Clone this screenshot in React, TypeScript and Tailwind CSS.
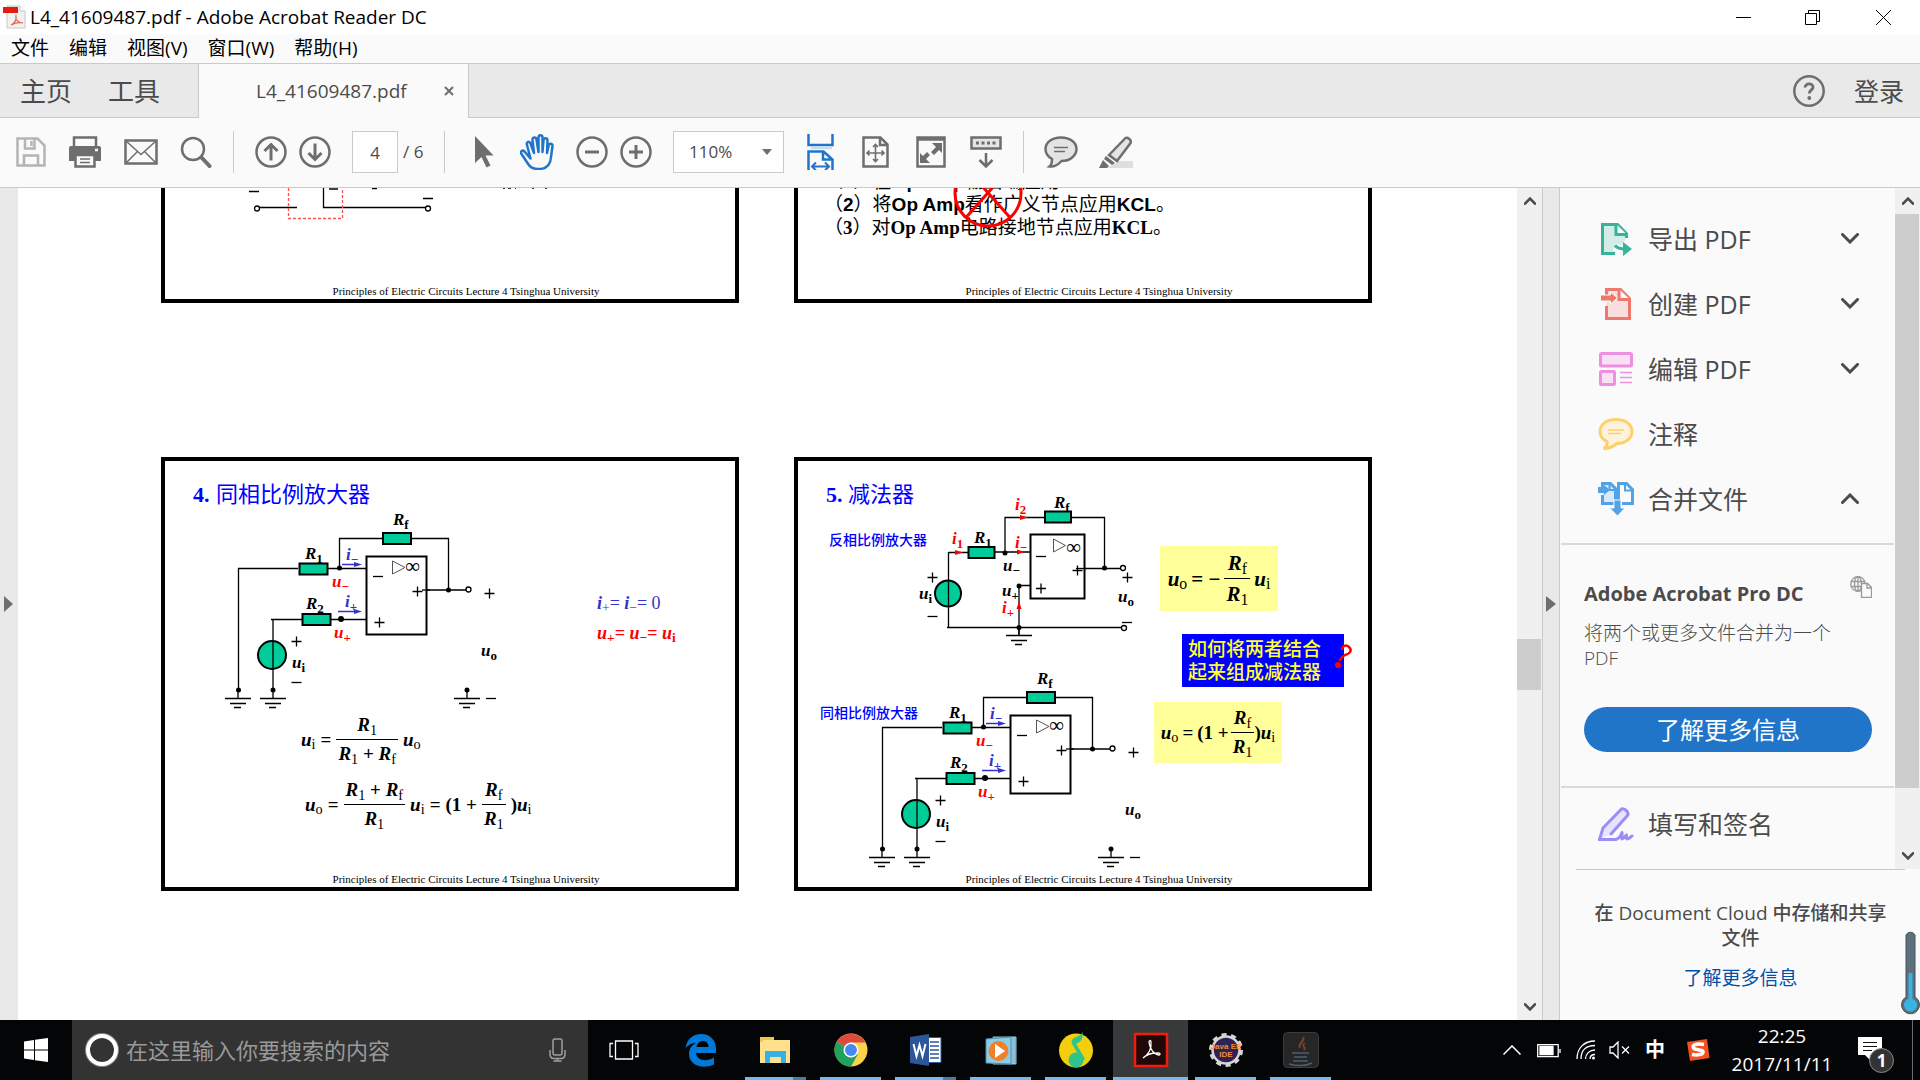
import React from "react";

const UI = "font-['Open_Sans','Noto_Sans_CJK_SC',sans-serif]";
const GREY = "#6e6e6e";
const BLUE = "#2175c9";

/* ---------- circuit drawing helpers ---------- */

type SymProps = {
  x: number;
  y: number;
  m: string;
  s: string;
  color?: string;
  size?: number;
};

function Sym({ x, y, m, s, color = "#000", size = 17 }: SymProps) {
  return (
    <text x={x} y={y} fill={color} fontSize={size} fontWeight={700}>
      <tspan fontStyle="italic">{m}</tspan>
      <tspan dy={4} fontSize={13}>
        {s}
      </tspan>
    </text>
  );
}

function Plus({ x, y }: { x: number; y: number }) {
  return <path d={`M${x - 5} ${y}h10M${x} ${y - 5}v10`} stroke="#000" strokeWidth="1.3" fill="none" />;
}

function Minus({ x, y }: { x: number; y: number }) {
  return <path d={`M${x - 5} ${y}h10`} stroke="#000" strokeWidth="1.3" fill="none" />;
}

function Resistor({ x, y, w = 28 }: { x: number; y: number; w?: number }) {
  return <rect x={x} y={y} width={w} height={11} fill="#00cc99" stroke="#000" strokeWidth="2" />;
}

function Ground({ x, y }: { x: number; y: number }) {
  return (
    <path
      d={`M${x} ${y - 8}v8M${x - 13} ${y}h26M${x - 8} ${y + 5}h16M${x - 4} ${y + 9}h7`}
      stroke="#000"
      strokeWidth="1.3"
      fill="none"
    />
  );
}

function NonInvertingAmp() {
  return (
    <g>
      <Sym x={393} y={525} m="R" s="f" />
      <Sym x={305} y={559} m="R" s="1" />
      <Sym x={306} y={609} m="R" s="2" />
      <g stroke="#000" strokeWidth="1.3" fill="none">
        <path d="M382 538.5H339.5V568M412 538.5h36.500V590M238.500 690V568.500H298M328 568.500h38M302 619.500h-31M330 619.500h36M425 590h41" />
      </g>
      <Resistor x={383} y={533} />
      <Resistor x={299.500} y={563.500} />
      <Resistor x={302.500} y={614} />
      <rect x={366.500} y={556.500} width={60} height={78} fill="#fff" stroke="#000" strokeWidth="2" />
      <path d="M392.500 561v13l12.500-6.500z" fill="none" stroke="#555" strokeWidth="1" />
      <text x={405} y={573} fontSize={21}>
        ∞
      </text>
      <Minus x={378} y={576.500} />
      <Plus x={417.500} y={591.500} />
      <path d="M422 590h8" stroke="#000" strokeWidth="1.3" />
      <Plus x={379.500} y={622.500} />
      <Plus x={489.500} y={593.500} />
      <circle cx={272} cy={655} r={14} fill="#00cc99" stroke="#000" strokeWidth="2" />
      <path d="M273 619V690" stroke="#000" strokeWidth="1.3" />
      <circle cx={468.500} cy={589.500} r={2.500} fill="#fff" stroke="#000" strokeWidth="1.3" />
      <circle cx={448.500} cy={590} r={2.500} />
      <circle cx={339.500} cy={568} r={2.500} />
      <circle cx={341} cy={619} r={3} />
      <circle cx={238.500} cy={690} r={2.500} />
      <circle cx={273} cy={690} r={2.500} />
      <circle cx={467} cy={690} r={2.500} />
      <Ground x={238} y={698.500} />
      <Ground x={273} y={698.500} />
      <Ground x={467} y={698.500} />
      <Minus x={491} y={698.500} />
      <Plus x={296.500} y={641.500} />
      <Minus x={296.500} y={682.500} />
      <Sym x={292} y={668} m="u" s="i" />
      <Sym x={481} y={656} m="u" s="o" />
      <Sym x={332} y={587} m="u" s="−" color="#ff0000" />
      <Sym x={334} y={638} m="u" s="+" color="#ff0000" />
      <Sym x={346} y={560} m="i" s="−" color="#3333cc" />
      <Sym x={345} y={607} m="i" s="+" color="#3333cc" />
      <path d="M342 564.500h14M338 611.500h18" stroke="#3333cc" strokeWidth="1.300" />
      <path d="M354 562l8 2.500-8 2.500zM354 609l8 2.500-8 2.500z" fill="#3333cc" />
    </g>
  );
}

function InvertingAmp() {
  return (
    <g>
      <Sym x={1054} y={508} m="R" s="f" />
      <Sym x={974} y={543} m="R" s="1" />
      <g stroke="#000" strokeWidth="1.3" fill="none">
        <path d="M1044 517.500h-39V552M1071 517.500h33.500V568M948.500 552.500H968M995 552h35M1076 568.500h44M947 627.500h174M1019 636v-50.500h11" />
      </g>
      <Resistor x={1045} y={511.500} w={26} />
      <Resistor x={968.500} y={547} w={26} />
      <rect x={1030.500} y={534.500} width={54} height={64} fill="#fff" stroke="#000" strokeWidth="2" />
      <path d="M1053.500 539v13l12-6.500z" fill="none" stroke="#555" strokeWidth="1" />
      <text x={1066} y={554} fontSize={21}>
        ∞
      </text>
      <Minus x={1041} y={556.500} />
      <Plus x={1077.500} y={570.500} />
      <path d="M1076 568.500h10" stroke="#000" strokeWidth="1.3" />
      <Plus x={1041} y={588.500} />
      <Plus x={1127.500} y={577.500} />
      <Plus x={932.500} y={577.500} />
      <Minus x={932.500} y={616.500} />
      <Minus x={1127} y={622.500} />
      <circle cx={948} cy={593.500} r={13} fill="#00cc99" stroke="#000" strokeWidth="2" />
      <path d="M948.500 552v76" stroke="#000" strokeWidth="1.3" />
      <circle cx={1123} cy={568} r={2.500} fill="#fff" stroke="#000" strokeWidth="1.3" />
      <circle cx={1124} cy={628} r={2.500} fill="#fff" stroke="#000" strokeWidth="1.3" />
      <circle cx={1104.500} cy={568} r={2.500} />
      <circle cx={1005} cy={553} r={2.500} />
      <circle cx={1019} cy={586} r={2.500} />
      <circle cx={1019} cy={627.500} r={2.500} />
      <Ground x={1019} y={635.500} />
      <path d="M955 550l8 2.500-8 2.500zM1020 515l8 2.500-8 2.500zM1017 549.500l8 2.500-8 2.500zM1016.500 609l2.500-8 2.500 8z" fill="#ff0000" />
      <Sym x={919} y={599} m="u" s="i" />
      <Sym x={1118} y={602} m="u" s="o" />
      <Sym x={1003} y={571} m="u" s="−" />
      <Sym x={1002} y={596} m="u" s="+" />
      <Sym x={952} y={544} m="i" s="1" color="#ff0000" />
      <Sym x={1015} y={510} m="i" s="2" color="#ff0000" />
      <Sym x={1015} y={548} m="i" s="−" color="#ff0000" />
      <Sym x={1002} y={613} m="i" s="+" color="#ff0000" />
    </g>
  );
}

/* ---------- formulas ---------- */

function V({ m, s }: { m: string; s: string }) {
  return (
    <span className="whitespace-nowrap">
      <i>{m}</i>
      <sub className="font-normal">{s}</sub>
    </span>
  );
}

function Frac({ top, bottom }: { top: React.ReactNode; bottom: React.ReactNode }) {
  return (
    <span className="inline-flex flex-col text-center">
      <span className="border-b border-black px-0.5 pb-0.5">{top}</span>
      <span className="px-0.5 pt-0.5">{bottom}</span>
    </span>
  );
}

function Footer() {
  return (
    <p className="absolute inset-x-0 bottom-0 pl-8 text-center text-[11px] leading-4 whitespace-nowrap">
      Principles of Electric Circuits Lecture 4 Tsinghua University
    </p>
  );
}

const SERIF = "font-['Liberation_Serif','Noto_Sans_CJK_SC',serif]";

function Slide({ cropped, children }: { cropped?: boolean; children: React.ReactNode }) {
  return (
    <section
      className={`relative w-[578px] shrink-0 border-4 border-black bg-white text-black ${SERIF} ${
        cropped ? "h-[115px] border-t-0" : "h-[434px]"
      }`}
    >
      {children}
      <Footer />
    </section>
  );
}

function Pages() {
  return (
    <div className="flex flex-col items-center gap-[154px] pr-0.5">
      <div className="flex gap-[55px]">
        <Slide cropped>
          <svg className="absolute inset-0 h-full w-full" viewBox="165 188 570 111">
            <path d="M249 191.500h10M423 198.500h10M259 207.500h38M323.500 188v19.500H426M329 189h9M372 188.500h5" stroke="#000" strokeWidth="1.3" fill="none" />
            <path d="M503 188.500h2M508 188.500h3M515 188.500h1M532 188.500h2M545 188.500h2" stroke="#333" strokeWidth="1" />
            <path d="M288.500 188v30.500h54V188" stroke="#ff5050" strokeWidth="1.3" strokeDasharray="3 2" fill="none" />
            <circle cx="257" cy="208.500" r="2.500" fill="#fff" stroke="#000" strokeWidth="1.3" />
            <circle cx="428" cy="208.500" r="2.500" fill="#fff" stroke="#000" strokeWidth="1.3" />
          </svg>
        </Slide>
        <Slide cropped>
          <svg className="absolute inset-0 h-full w-full" viewBox="798 188 570 111">
            <g fontSize="19" fontWeight="700">
              <text x="824" y="188" className="font-['Liberation_Sans','Noto_Sans_CJK_SC',sans-serif]">
                <tspan fontWeight="400">（</tspan>1<tspan fontWeight="400">）在</tspan>Op Amp
                <tspan fontWeight="400">输出端应用</tspan>
              </text>
              <text x="824" y="211" className="font-['Liberation_Sans','Noto_Sans_CJK_SC',sans-serif]">
                <tspan fontWeight="400">（</tspan>2<tspan fontWeight="400">）将</tspan>Op Amp
                <tspan fontWeight="400">看作广义节点应用</tspan>KCL<tspan fontWeight="400">。</tspan>
              </text>
              <text x="824" y="234">
                <tspan fontWeight="400">（</tspan>3<tspan fontWeight="400">）对</tspan>Op Amp
                <tspan fontWeight="400">电路接地节点应用</tspan>KCL<tspan fontWeight="400">。</tspan>
              </text>
            </g>
            <g stroke="#ff0000" strokeWidth="3" fill="none">
              <circle cx="988" cy="193" r="33" />
              <path d="M966 217.500L1010 168M1010 217.500L966 168" />
            </g>
          </svg>
        </Slide>
      </div>
      <div className="flex gap-[55px]">
        <Slide>
          <svg className="absolute inset-0 h-full w-full" viewBox="165 461 570 426">
            <text x="193" y="502" fontSize="22" fill="#0000ff">
              <tspan fontWeight="700">4.</tspan>
              <tspan x="216">同相比例放大器</tspan>
            </text>
            <NonInvertingAmp />
          </svg>
          <p className="absolute top-[130px] left-[432px] text-[18px] leading-6 text-[#3333cc]">
            <i className="font-bold">i</i>
            <sub>+</sub>= <i className="font-bold">i</i>
            <sub>−</sub>= 0
          </p>
          <p className="absolute top-[160px] left-[432px] text-[18px] leading-6 font-bold text-[#ff0000]">
            <i>u</i>
            <sub>+</sub>= <i>u</i>
            <sub>−</sub>= <i>u</i>
            <sub>i</sub>
          </p>
          <div className="absolute top-[252px] left-[136px] flex h-[53px] items-center gap-[5px] text-[19px] leading-6 font-bold">
            <V m="u" s="i" />=
            <Frac top={<V m="R" s="1" />} bottom={<><V m="R" s="1" /> + <V m="R" s="f" /></>} />
            <V m="u" s="o" />
          </div>
          <div className="absolute top-[317px] left-[140px] flex h-[53px] items-center gap-[5px] text-[19px] leading-6 font-bold">
            <V m="u" s="o" />=
            <Frac top={<><V m="R" s="1" /> + <V m="R" s="f" /></>} bottom={<V m="R" s="1" />} />
            <V m="u" s="i" />=<span>(1 +</span>
            <Frac top={<V m="R" s="f" />} bottom={<V m="R" s="1" />} />
            <span>
              )<V m="u" s="i" />
            </span>
          </div>
        </Slide>
        <Slide>
          <svg className="absolute inset-0 h-full w-full" viewBox="798 461 570 426">
            <text x="826" y="502" fontSize="22" fill="#0000ff">
              <tspan fontWeight="700">5.</tspan>
              <tspan x="848">减法器</tspan>
            </text>
            <g fontSize="14" fill="#0000ff" fontWeight="500">
              <text x="829" y="545">反相比例放大器</text>
              <text x="820" y="718">同相比例放大器</text>
            </g>
            <InvertingAmp />
            <g transform="translate(644 159)">
              <NonInvertingAmp />
            </g>
          </svg>
          <div className="absolute top-[85px] left-[362px] flex h-[65px] w-[118px] items-center justify-center gap-1 bg-[#ffff99] text-[21px] leading-[26px] font-bold">
            <V m="u" s="o" />
            <span>= −</span>
            <Frac top={<V m="R" s="f" />} bottom={<V m="R" s="1" />} />
            <V m="u" s="i" />
          </div>
          <p className="absolute top-[173px] left-[384px] h-[53px] w-[162px] bg-[#0000ff] px-1.5 pt-1 text-[19px] leading-[23px] font-medium text-[#ffff33]">
            如何将两者结合
            <br />
            起来组成减法器
          </p>
          <svg className="absolute top-[182px] left-[536px] h-7 w-6" viewBox="0 0 24 28">
            <path d="M8 7C8 3 12 1 15 4C19 8 15 11 11 12C9 13 7 15 5.500 18" fill="none" stroke="#ff0000" strokeWidth="2.500" />
            <circle cx="4" cy="22" r="3" fill="#ff0000" />
          </svg>
          <div className="absolute top-[241px] left-[356px] flex h-[61px] w-[128px] items-center justify-center bg-[#ffff99] text-[19px] leading-6 font-bold">
            <V m="u" s="o" />
            <span className="px-1">=</span>
            <span className="pr-0.5">(1 +</span>
            <Frac top={<V m="R" s="f" />} bottom={<V m="R" s="1" />} />
            <span>
              )<V m="u" s="i" />
            </span>
          </div>
        </Slide>
      </div>
    </div>
  );
}

/* ---------- generic pieces ---------- */

function Chevron({ up, className, w = 2 }: { up?: boolean; className: string; w?: number }) {
  return (
    <svg viewBox="0 0 18 11" className={className} fill="none" stroke="#4b4b4b" strokeWidth={w} strokeLinecap="round">
      <path d={up ? "M1.500 9.500L9 2l7.500 7.500" : "M1.500 1.500L9 9l7.500-7.500"} />
    </svg>
  );
}

function Tool({ label, className, box, children }: { label: string; className: string; box: string; children: React.ReactNode }) {
  return (
    <button aria-label={label} className={`shrink-0 ${className}`}>
      <svg viewBox={box} className="block h-full w-full" fill="none" stroke={GREY} strokeWidth="2.500">
        {children}
      </svg>
    </button>
  );
}

function Sep({ className }: { className: string }) {
  return <div className={`h-[42px] w-px shrink-0 bg-[#cacaca] ${className}`} />;
}

function TitleBar() {
  return (
    <header className="flex h-[34px] shrink-0 items-center bg-white pl-[3px] text-[19px] text-black">
      <svg viewBox="0 0 23 24" className="h-6 w-[23px]">
        <path d="M4 1h13l5 5v17H4z" fill="#f1f1f1" stroke="#c8c8c8" />
        <path d="M17 1v5h5" fill="#fff" stroke="#c8c8c8" />
        <path d="M0 2h15v6H0z" fill="#e11d0b" />
        <path d="M8 20c4-2 6-6 5-9c-1 4 3 7 7 7c-4-1-8 0-12 2z" fill="none" stroke="#f0605a" strokeWidth="1.200" />
      </svg>
      <h1 className="ml-1 grow leading-6">L4_41609487.pdf - Adobe Acrobat Reader DC</h1>
      <button aria-label="最小化" className="flex h-full w-[69px] items-center justify-center">
        <svg viewBox="0 0 15 15" className="h-[15px] w-[15px]" stroke="#000">
          <path d="M0 7.500h15" />
        </svg>
      </button>
      <button aria-label="还原" className="flex h-full w-[69px] items-center justify-center">
        <svg viewBox="0 0 15 15" className="h-[15px] w-[15px]" stroke="#000" fill="none">
          <path d="M.5 3.500h11v11H.5zM3.500 3.500v-3h11v11h-3" />
        </svg>
      </button>
      <button aria-label="关闭" className="flex h-full w-[73px] items-center justify-center">
        <svg viewBox="0 0 15 15" className="h-[15px] w-[15px]" stroke="#000">
          <path d="M0 0l15 15M15 0L0 15" />
        </svg>
      </button>
    </header>
  );
}

function MenuBar() {
  return (
    <nav className="flex h-[30px] shrink-0 items-center gap-5 border-b border-[#cacaca] bg-[#fafafa] pb-0.5 pl-[11px] text-[19px] leading-6 text-black">
      {["文件", "编辑", "视图(V)", "窗口(W)", "帮助(H)"].map((m) => (
        <button key={m}>{m}</button>
      ))}
    </nav>
  );
}

function TabBar() {
  return (
    <div className="flex h-[54px] shrink-0 bg-[#e9e9e9] text-[#4b4b4b]">
      <div className="flex w-[199px] items-center gap-9 border-r border-b border-[#cacaca] pl-5 text-[26px] leading-8">
        <button>主页</button>
        <button>工具</button>
      </div>
      <div className="flex w-[270px] items-center border-r border-[#cacaca] bg-[#fafafa] pl-[57px]">
        <button className="w-[154px] text-left text-[19px] leading-7 whitespace-nowrap">L4_41609487.pdf</button>
        <button aria-label="关闭标签" className="ml-[34px]">
          <svg viewBox="0 0 10 10" className="h-[10px] w-[10px]" stroke="#6e6e6e" strokeWidth="2">
            <path d="M1 1l8 8M9 1L1 9" />
          </svg>
        </button>
      </div>
      <div className="flex grow items-center justify-end gap-[29px] border-b border-[#cacaca] pr-4">
        <button aria-label="帮助">
          <svg viewBox="0 0 32 32" className="h-8 w-8">
            <circle cx="16" cy="16" r="14.700" fill="none" stroke="#6e6e6e" strokeWidth="2.500" />
            <path d="M12 12.500C12 7.500 20.500 8 20 12.500C19.700 15 16.300 15 16.300 18.500" fill="none" stroke="#6e6e6e" strokeWidth="2.800" />
            <circle cx="16.300" cy="23" r="1.900" fill="#6e6e6e" />
          </svg>
        </button>
        <button className="text-[25px] leading-8">登录</button>
      </div>
    </div>
  );
}

function Toolbar() {
  return (
    <div className="flex h-[70px] shrink-0 items-center border-b border-[#cacaca] bg-[#fafafa] pb-px pl-4 text-[17px] text-[#4b4b4b]">
      <Tool label="保存" className="h-[30px] w-[30px]" box="0 0 30 30">
        <g stroke="#b4b4b4">
          <path d="M1.500 1.500h20l7 7v20h-27zM8 28V18.500h14V28" />
          <path d="M9 2v9.500h9.500V2M15.500 4v5" />
        </g>
      </Tool>
      <Tool label="打印" className="ml-[22px] h-8 w-[34px]" box="0 0 34 32">
        <path d="M6 11V1.500h22V11" fill="#fafafa" />
        <path d="M3 10h28a2 2 0 0 1 2 2v13H1V12a2 2 0 0 1 2-2z" fill={GREY} stroke="none" />
        <path d="M7.500 19h19v11.500h-19z" fill="#fafafa" />
        <path d="M12 23h10M12 26.500h10" strokeWidth="1.500" />
        <path d="M27 14h3" stroke="#fafafa" />
      </Tool>
      <Tool label="邮件" className="ml-[22px] h-[26px] w-[34px]" box="0 0 34 26">
        <path d="M1.500 1.500h31v23h-31z" />
        <path d="M2 2l15 13.500L32 2M2 24l11.500-11.500M32 24L20.500 12.500" strokeWidth="1.500" />
      </Tool>
      <Tool label="搜索" className="ml-[22px] h-[32px] w-[32px]" box="0 0 32 32">
        <circle cx="13" cy="13" r="11" />
        <path d="M21.500 21.500l8 8.500" strokeWidth="4" strokeLinecap="round" />
      </Tool>
      <Sep className="ml-[21px]" />
      <Tool label="上一页" className="ml-[21px] h-8 w-8" box="0 0 32 32">
        <circle cx="16" cy="16" r="14.500" />
        <path d="M16 24.500V9M9.500 15L16 8.500l6.500 6.500" strokeWidth="3" />
      </Tool>
      <Tool label="下一页" className="ml-3 h-8 w-8" box="0 0 32 32">
        <circle cx="16" cy="16" r="14.500" />
        <path d="M16 7.500V23M9.500 17l6.500 6.500 6.500-6.500" strokeWidth="3" />
      </Tool>
      <input
        aria-label="页码"
        defaultValue="4"
        className="ml-[21px] h-[42px] w-[46px] shrink-0 border border-[#cacaca] bg-white text-center"
      />
      <span className="ml-[5px] w-[41px] shrink-0">/ 6</span>
      <Sep className="" />
      <Tool label="选择" className="ml-[29px] h-8 w-5" box="0 0 20 32">
        <path d="M1 0l18.500 19.500h-8l5 10-4 2-5-10.500-6.500 6z" fill={GREY} stroke="none" />
      </Tool>
      <Tool label="手形工具" className="ml-[26px] h-[36px] w-[34px]" box="0 0 34 36">
        <path
          d="M10.500 24.500L4.500 17.500c-2-2-4.500 0-3 2.500l7 10.500c2 3 5 4.500 10 4.500c8 0 12-4 12.500-12l1.500-11c0-3-3.500-3-4 0l-1.500 7l.5-12.500c0-3-4-3-4 0l-1 11.500V3.500c0-3-4-3-4 0V18L16.500 5.500c-.5-3-4.500-2.500-4 .5L14 19l-3.500-9.500c-1-3-4.500-1.500-3.500 1.500z"
          stroke={BLUE}
          strokeLinejoin="round"
        />
      </Tool>
      <Tool label="缩小" className="ml-[22px] h-8 w-8" box="0 0 32 32">
        <circle cx="16" cy="16" r="14.500" />
        <path d="M9 16h14" strokeWidth="3" />
      </Tool>
      <Tool label="放大" className="ml-3 h-8 w-8" box="0 0 32 32">
        <circle cx="16" cy="16" r="14.500" />
        <path d="M9 16h14M16 9v14" strokeWidth="3" />
      </Tool>
      <div className="relative ml-[21px] shrink-0">
        <select
          aria-label="缩放比例"
          defaultValue="110%"
          className="block h-[42px] w-[111px] appearance-none rounded-none border border-[#cacaca] bg-white pl-[15px]"
        >
          <option>110%</option>
          <option>100%</option>
        </select>
        <svg viewBox="0 0 10 6" className="pointer-events-none absolute top-[18px] right-3 h-1.5 w-2.5">
          <path d="M0 0h10L5 6z" fill={GREY} />
        </svg>
      </div>
      <Tool label="适合宽度" className="ml-[23px] h-9 w-[27px]" box="0 0 27 36">
        <g stroke={BLUE}>
          <path d="M1.500 0v11h24V0M1.500 36V17.500h15l9 8V36M16 17v8.500h9" />
          <path d="M5 32.500h17M9 28.500l-4 4 4 4M18 28.500l4 4-4 4" strokeWidth="2" />
          <path d="M4 14h21" stroke="#c9ddf1" />
        </g>
      </Tool>
      <Tool label="适合一页" className="ml-7 h-8 w-[27px]" box="0 0 27 32">
        <path d="M1.500 1.500h17l7 7v22h-24zM18 2v7h7" />
        <path d="M13.500 9v16M5.500 17h16M11 11l2.500-2.500L16 11M11 23l2.500 2.500L16 23M7.500 14.500L5 17l2.500 2.500M19.500 14.500L22 17l-2.500 2.500" strokeWidth="1.600" />
      </Tool>
      <Tool label="全屏" className="ml-[27px] h-8 w-[30px]" box="0 0 30 32">
        <path d="M1.500 1.500h27v29h-27z" />
        <path d="M1 3h28" strokeWidth="3.500" />
        <path d="M16 7h10v10l-3-3-5 5-3-3 5-5zM14 27H4V17l3 3 4-4 3 3-4 4z" fill={GREY} stroke="none" />
      </Tool>
      <Tool label="阅读模式" className="ml-6 h-8 w-8" box="0 0 32 32">
        <path d="M1.500 1.500h29v11h-29z" fill="#e4e4e4" />
        <path d="M6 7h3M11.500 7h3M17 7h3M22.500 7h3" strokeWidth="3" />
        <path d="M16 17v13M9.500 24l6.500 6.500 6.500-6.500" />
      </Tool>
      <Sep className="ml-[21px]" />
      <Tool label="注释" className="ml-5 h-8 w-[34px]" box="0 0 34 32">
        <path d="M17 1.500c9 0 15.500 5 15.500 11.500S26 25 17.500 25c-4 4.500-8 6-12 5.500c2-1.500 2.500-4 2.500-7.500C3.500 20.500 1.500 17 1.500 13C1.500 6.500 8 1.500 17 1.500z" fill="#e4e4e4" />
        <path d="M10 11.500h14M10 15.500h11" strokeWidth="1.500" />
      </Tool>
      <Tool label="突出显示" className="ml-[21px] h-8 w-[34px]" box="0 0 34 32">
        <path d="M20 25h14v7H8z" fill="#dedede" stroke="none" />
        <path d="M10 19L26 2.500c2-2 7 1 5.500 4.500L18 25z" fill="#e4e4e4" />
        <path d="M0 32l4-8 6 6-2 2zM7 20l9 7-3 2-8-6z" fill={GREY} stroke="none" />
      </Tool>
    </div>
  );
}

function ScrollArrow({ up }: { up?: boolean }) {
  return (
    <button aria-label={up ? "向上滚动" : "向下滚动"} className="flex h-[26px] w-full shrink-0 items-center justify-center">
      <Chevron up={up} w={4} className="h-[8px] w-[12px]" />
    </button>
  );
}

function DocumentArea() {
  return (
    <div className="flex min-w-0 grow">
      <div className="flex w-[18px] shrink-0 items-center bg-[#e9e9e9]">
        <button aria-label="展开导航窗格" className="pl-1">
          <svg viewBox="0 0 10 16" className="h-4 w-2.5">
            <path d="M0 0l9 8-9 8z" fill={GREY} />
          </svg>
        </button>
      </div>
      <main className="min-w-0 grow overflow-hidden bg-white">
        <Pages />
      </main>
      <div className="flex w-[25px] shrink-0 flex-col bg-[#f0f0f0]">
        <ScrollArrow up />
        <div className="grow-[425]" />
        <div className="mr-px h-[51px] bg-[#cdcdcd]" />
        <div className="grow-[304]" />
        <ScrollArrow />
      </div>
      <div className="flex w-[18px] shrink-0 items-center border-x border-[#cacaca] bg-[#e9e9e9]">
        <button aria-label="收起工具窗格" className="pl-[3px]">
          <svg viewBox="0 0 10 16" className="h-4 w-2.5">
            <path d="M0 0l10 8-10 8z" fill={GREY} />
          </svg>
        </button>
      </div>
    </div>
  );
}

const ICON_EXPORT = (
  <svg viewBox="0 0 36 36" className="h-9 w-9" fill="none" stroke="#36b39a" strokeWidth="3">
    <path d="M17 32.500H4.500v-29h15l9 9V17" fill="#d3ece6" />
    <path d="M18 3v10.500h11" fill="#fafafa" />
    <path d="M17 26c3 2 6 2.500 10 2.500" stroke="#fafafa" strokeWidth="8" />
    <path d="M17 24.500c2 2.500 5 3.500 10 3.500" />
    <path d="M25 21l9 7-9 7z" fill="#36b39a" stroke="none" />
  </svg>
);
const ICON_CREATE = (
  <svg viewBox="0 0 36 36" className="h-9 w-9" fill="none" stroke="#f0776c" strokeWidth="3">
    <path d="M8.500 9V3.500h14l9 9v20h-23V20" fill="#f8dedd" />
    <path d="M21 3v10.500h11" fill="#fafafa" />
    <path d="M2.500 9h10V6l7 6-7 6v-3h-10z" fill="#f0776c" stroke="#fafafa" strokeWidth="1" />
  </svg>
);
const ICON_EDIT = (
  <svg viewBox="0 0 36 36" className="h-9 w-9" fill="none" stroke="#ee8fe0" strokeWidth="3">
    <rect x="2.500" y="2.500" width="31" height="12.500" rx="1" fill="#f8e1f5" />
    <rect x="2.500" y="20.500" width="14" height="13" rx="1" fill="#f8e1f5" />
    <path d="M22 21.500h12M22 26.500h12M22 31.500h12" strokeWidth="1.300" />
  </svg>
);
const ICON_NOTE = (
  <svg viewBox="0 0 36 36" className="h-9 w-9" fill="none" stroke="#fdd16a" strokeWidth="3">
    <path d="M18 3.500c9.500 0 16 5 16 12s-6.500 12-15 12c-4 3.500-8 5-13.500 5c3-1.500 4-3.500 3.500-7C4.500 23.500 2 20 2 15.500c0-7 6.500-12 16-12z" fill="#fdf3dc" />
    <path d="M10 14h16M10 17.500h13" strokeWidth="1.300" />
  </svg>
);
const ICON_COMBINE = (
  <svg viewBox="0 0 36 36" className="h-9 w-9" fill="none" stroke="#4fa3e6" strokeWidth="3">
    <path d="M4.500 8V2.500h8l5 5v15h-13V14" fill="#d8e9f7" />
    <path d="M20.500 22V2.500h8l6 6v14H24" />
    <path d="M11.500 2v7h6M27 2v7.500h7" strokeWidth="2" />
    <path d="M0 6h6V4l6 5-6 5v-2H0z" fill="#4fa3e6" stroke="none" />
    <path d="M16 19h7v8h4l-7.500 8-8-8H16z" fill="#4fa3e6" stroke="#fafafa" strokeWidth="1" />
  </svg>
);
const ICON_SIGN = (
  <svg viewBox="0 0 36 36" className="h-9 w-9" fill="none" stroke="#9a8df8" strokeWidth="3" strokeLinejoin="round" strokeLinecap="round">
    <path d="M1.500 33.500L5 22L23 3.500c2-2.500 9 2.500 6.500 6L13 28" fill="#e6e4fa" />
    <path d="M1.500 33.500H18c3-1 5-4 6-7c.5 3-1 5 0 6.500c2-1 3-2 4.500-4c0 2-.5 3 .5 4c2 0 3-1.500 5-3" />
  </svg>
);

function PanelRow({ icon, label, chevron }: { icon: React.ReactNode; label: string; chevron?: "up" | "down" }) {
  return (
    <button className="flex h-[65px] w-full shrink-0 items-center pr-[35px] pl-[37px] text-left text-[25px] leading-8 text-[#4b4b4b]">
      {icon}
      <span className="ml-[14px] grow">{label}</span>
      {chevron && <Chevron up={chevron === "up"} w={3} className="h-[11px] w-[18px]" />}
    </button>
  );
}

function ToolsPanel() {
  return (
    <aside className="relative flex w-[360px] shrink-0 flex-col bg-[#fafafa] text-[#4b4b4b]">
      <div className="flex h-[681px] shrink-0">
        <div className="flex min-w-0 grow flex-col pt-[18px] pr-px pl-px">
          <PanelRow icon={ICON_EXPORT} label="导出 PDF" chevron="down" />
          <PanelRow icon={ICON_CREATE} label="创建 PDF" chevron="down" />
          <PanelRow icon={ICON_EDIT} label="编辑 PDF" chevron="down" />
          <PanelRow icon={ICON_NOTE} label="注释" />
          <PanelRow icon={ICON_COMBINE} label="合并文件" chevron="up" />
          <div className="mt-3 flex h-[245px] shrink-0 flex-col border-y-2 border-[#d9d9d9] pr-[22px] pl-[23px]">
            <div className="mt-[31px] flex items-start justify-between">
              <h2 className="pt-1 text-[20px] leading-7 font-bold">Adobe Acrobat Pro DC</h2>
              <svg viewBox="0 0 22 22" className="h-[22px] w-[22px]" fill="none" stroke="#999" strokeWidth="1.300">
                <circle cx="8" cy="8" r="7.300" />
                <ellipse cx="8" cy="8" rx="3.500" ry="7.300" />
                <path d="M1 5.500h14M1 10.500h14M8 0v16" />
                <path d="M11.500 7.500h6l4 4v10h-10zM17 8v4h4" fill="#fafafa" />
              </svg>
            </div>
            <p className="mt-[13px] pr-5 text-[19px] leading-[25px] font-light">将两个或更多文件合并为一个 PDF</p>
            <button className="mt-9 h-[45px] shrink-0 rounded-full bg-[#2175c9] text-[24px] leading-8 text-white">
              了解更多信息
            </button>
          </div>
          <div className="mt-[3px]">
            <PanelRow icon={ICON_SIGN} label="填写和签名" />
          </div>
        </div>
        <div className="flex w-[25px] shrink-0 flex-col bg-[#f0f0f0]">
          <ScrollArrow up />
          <div className="mr-px h-[574px] bg-[#cdcdcd]" />
          <div className="grow" />
          <ScrollArrow />
        </div>
      </div>
      <div className="mr-[15px] ml-4 border-t border-[#cacaca] px-2.5 pt-[31px] text-center text-[19px] leading-[25px]">
        <p className="font-medium">在 Document Cloud 中存储和共享文件</p>
        <a href="#more" className="mt-[15px] inline-block text-[#0050a8]">
          了解更多信息
        </a>
      </div>
      <svg viewBox="0 0 20 86" className="absolute right-0 bottom-[5px] h-[86px] w-5">
        <path d="M6 6a5 5 0 0 1 9 0v62a9 9 0 1 1-9 0z" fill="#5d6f7b" stroke="#45535d" />
        <path d="M10.500 44v30" stroke="#37b4e3" strokeWidth="4" />
        <circle cx="10.500" cy="76" r="6.500" fill="#37b4e3" />
      </svg>
    </aside>
  );
}

/* ---------- taskbar ---------- */

function TaskButton({ label, running, active, stacked, children }: { label: string; running?: boolean; active?: boolean; stacked?: boolean; children: React.ReactNode }) {
  return (
    <button
      aria-label={label}
      className={`flex h-full w-[75px] shrink-0 flex-col items-center justify-between ${active ? "bg-[#38393b]" : ""}`}
    >
      <svg viewBox="0 0 36 36" className="mt-3 h-9 w-9">
        {children}
      </svg>
      <span className={`flex h-[3px] justify-end ${running ? "bg-[#76b9ed]" : ""} ${active ? "w-full" : "w-[61px]"}`}>
        {stacked && <span className="w-[13px] bg-[#4d7ba1]" />}
      </span>
    </button>
  );
}

function Taskbar() {
  return (
    <footer className="flex h-[60px] shrink-0 items-center bg-[#040507] text-white">
      <button aria-label="开始" className="flex h-full w-[72px] shrink-0 items-center justify-center">
        <svg viewBox="0 0 24 24" className="h-6 w-6" fill="#fff">
          <path d="M0 3.500l10-1.500v9.500H0zM11 1.800L24 0v11.500H11zM0 12.500h10V22L0 20.500zM11 12.500h13V24l-13-1.800z" />
        </svg>
      </button>
      <div className="flex h-full w-[516px] shrink-0 items-center bg-[#333] pr-[22px] pl-3">
        <svg viewBox="0 0 36 36" className="h-9 w-9 shrink-0">
          <circle cx="18" cy="18" r="14.500" fill="none" stroke="#8a8a8a" strokeWidth="5" />
          <circle cx="18" cy="18" r="14" fill="none" stroke="#fff" strokeWidth="4" />
        </svg>
        <input
          aria-label="搜索"
          placeholder="在这里输入你要搜索的内容"
          className="ml-1.5 min-w-0 grow bg-transparent text-[22px] leading-8 placeholder:text-[#9a9a9a] placeholder:opacity-100"
        />
        <svg viewBox="0 0 17 24" className="h-6 w-[17px]" fill="none" stroke="#a0a0a0" strokeWidth="1.500">
          <rect x="4" y="1" width="9" height="16" rx="2" />
          <path d="M1 12v4c0 3 2 4.500 4 4.500h7c2 0 4-1.500 4-4.500v-4M8.500 20v3M4.500 23h8" />
        </svg>
      </div>
      <button aria-label="任务视图" className="flex h-full w-[75px] shrink-0 items-center justify-center pr-1">
        <svg viewBox="0 0 30 20" className="h-5 w-[30px]" fill="none" stroke="#fff" strokeWidth="1.300">
          <path d="M6.500 1h17v18h-17zM4 3.500H1v13h3M26 3.500h3v13h-3" />
        </svg>
      </button>
      <TaskButton label="Edge">
        <path d="M2.500 16C4 7 10 2 18 2c9 0 15 6 15 15v4H13c1 8 11 9 18 4.500v7C18 38 6 32.500 6 22c0-5.500 3-9 7.500-11.500C9 11 5 13 2.500 16zM13.500 15h12c0-8-10.500-8-12 0z" fill="#0078d7" />
      </TaskButton>
      <TaskButton label="文件资源管理器" running stacked>
        <path d="M2 5h14v3h16v23H2z" fill="#ffe08c" />
        <path d="M2 5h14v3H5v2H2z" fill="#f5c342" />
        <path d="M7 19h21v12h-5v-6H12v6H7z" fill="#35b1e6" />
      </TaskButton>
      <TaskButton label="Chrome" running>
        <circle cx="18" cy="18" r="16.500" fill="#fbd24c" />
        <path d="M18 18L3.700 9.750A16.500 16.500 0 0 0 18 34.500l7-12.500z" fill="#1fa260" />
        <path d="M18 18L3.700 9.750A16.500 16.500 0 0 1 32.300 10.500H18z" fill="#dd4b3e" />
        <circle cx="18" cy="18" r="7.500" fill="#fff" />
        <circle cx="18" cy="18" r="6" fill="#4688f4" />
      </TaskButton>
      <TaskButton label="Word" running stacked>
        <path d="M20 5.500h13v25H20z" fill="#fff" stroke="#2b579a" />
        <path d="M22 10h9M22 14h9M22 18h9M22 22h9M22 26h9" stroke="#2b579a" strokeWidth="1.500" />
        <path d="M2 5l19-3v32L2 31z" fill="#2b579a" />
        <path d="M5.500 12l3 12 3-11 3 11 3-12" fill="none" stroke="#fff" strokeWidth="2" />
      </TaskButton>
      <TaskButton label="视频播放器" running>
        <path d="M10 5h23v27H10z" fill="#5a9cc0" stroke="#8fc5df" />
        <path d="M29 5v27M31 5v27" stroke="#c3e2f0" />
        <path d="M3 7l25-2v27L3 31z" fill="#8ecbe6" stroke="#4f8fae" />
        <circle cx="15.500" cy="19" r="10" fill="#f0802a" />
        <path d="M12 12l10 7-10 7z" fill="#fff" />
      </TaskButton>
      <TaskButton label="QQ音乐" running>
        <circle cx="18" cy="18.500" r="17" fill="#f3cf0b" />
        <circle cx="18" cy="28" r="7.500" fill="#2fc48a" />
        <path d="M25.500 28L15 10" stroke="#2fc48a" strokeWidth="3.500" />
        <path d="M24.500 0c1 7-1 10-9 13c-3-3-2-6 1.500-7.500c3-1.500 6-2 7.500-5.500z" fill="#2fc48a" />
      </TaskButton>
      <TaskButton label="Adobe Acrobat Reader DC" running active>
        <path d="M2 2h32v32H2z" fill="#200708" stroke="#f01c0c" strokeWidth="2.500" />
        <path d="M10 26c5-3 9-9 8-16c-.3-2.500-2-1.500-2 .5c1 7 5 12 10 12.500c2-.5 1-2.500-2-2c-5 0-10 1-14 5z" fill="none" stroke="#fff" strokeWidth="1.300" />
      </TaskButton>
      <TaskButton label="Java EE IDE" running>
        <circle cx="18" cy="18" r="15" fill="none" stroke="#d5d5d5" strokeWidth="4" strokeDasharray="5 4.400" />
        <circle cx="18" cy="18" r="13.500" fill="#2c2255" stroke="#d5d5d5" strokeWidth="2.500" />
        <g fill="#f58a33" fontSize="8" fontWeight="700" textAnchor="middle" className="font-['Liberation_Sans',sans-serif]">
          <text x="18" y="17">Java EE</text>
          <text x="18" y="25">IDE</text>
        </g>
      </TaskButton>
      <TaskButton label="Java" running>
        <rect x="0.500" y="0.500" width="35" height="35" rx="4" fill="#262626" stroke="#3c3c3c" />
        <path d="M20 5c3 4-6 6-3 11M22 11c-5 3 2 4-1 7" fill="none" stroke="#7a4128" strokeWidth="2" />
        <path d="M9 21h17M11 25h13M10 29h15M6 32c8 2 17 2 23-1" fill="none" stroke="#4d5f72" strokeWidth="1.500" />
      </TaskButton>
      <div className="ml-auto flex h-full shrink-0 items-center">
        <svg viewBox="0 0 18 10" className="h-2.5 w-[18px]" fill="none" stroke="#fff" strokeWidth="1.500">
          <path d="M.5 9.500L9 1l8.500 8.500" />
        </svg>
        <svg viewBox="0 0 24 16" className="ml-4 h-4 w-6" fill="none" stroke="#fff" strokeWidth="1.300">
          <path d="M.7 2.700h20.500v12H.7zM23 7v4" />
          <path d="M3 4.500h13v8H3z" fill="#fff" />
        </svg>
        <svg viewBox="0 0 20 20" className="ml-[15px] h-5 w-5" fill="none" stroke="#fff" strokeWidth="1.300">
          <path d="M1 19C1 8 8 1 19 1M5 19C5 10 10 5.500 19 5.500M9.500 19c0-5 4-9 9.500-9M14 19c0-3 2-4.500 5-4.500" />
          <circle cx="17.500" cy="18" r="1.500" fill="#fff" stroke="none" />
        </svg>
        <svg viewBox="0 0 21 18" className="ml-[13px] h-[18px] w-[21px]" fill="none" stroke="#fff" strokeWidth="1.300">
          <path d="M1 6h3l5-5v16l-5-5H1zM13 5.500l7 7M20 5.500l-7 7" />
        </svg>
        <span className="ml-[15px] text-[20px] leading-6 font-bold">中</span>
        <svg viewBox="0 0 24 24" className="ml-[21px] h-6 w-6">
          <path d="M1 4l20-3 2.500 19L4 23z" fill="#f4511e" />
          <path d="M18 6.500C8 5 5.500 8 8 10.500c2 1.500 8 1 9 3c1 3-6 4-11 3" fill="none" stroke="#fff" strokeWidth="3.500" />
        </svg>
        <div className="ml-[17px] w-[110px] text-center text-[19px] leading-7">
          <div>22:25</div>
          <div>2017/11/11</div>
        </div>
        <button aria-label="操作中心" className="mt-2.5 ml-[21px]">
          <svg viewBox="0 0 36 36" className="h-9 w-9">
            <path d="M0 0h24v18H12v5l-5-5H0z" fill="#fff" />
            <path d="M5 5.500h14M5 9.500h14M5 13.500h9" stroke="#111" strokeWidth="1.200" />
            <circle cx="23.500" cy="23.500" r="12" fill="#333" stroke="#888" />
            <text x="23.500" y="29.500" fill="#fff" fontSize="17" fontWeight="700" textAnchor="middle">
              1
            </text>
          </svg>
        </button>
        <div className="mr-[7px] ml-[18px] h-full w-px bg-[#6b6b6b]" />
      </div>
    </footer>
  );
}

export default function App() {
  return (
    <div className={`flex h-screen flex-col overflow-hidden ${UI}`}>
      <TitleBar />
      <MenuBar />
      <TabBar />
      <Toolbar />
      <div className="flex min-h-0 grow overflow-hidden">
        <DocumentArea />
        <ToolsPanel />
      </div>
      <Taskbar />
    </div>
  );
}
